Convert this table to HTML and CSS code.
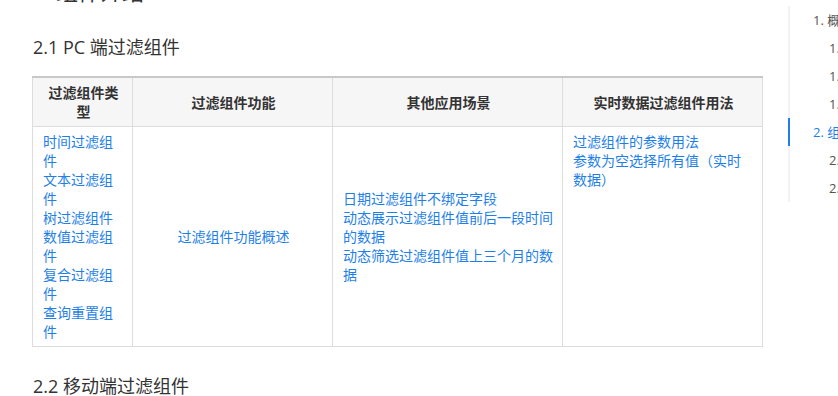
FILE: index.html
```html
<!DOCTYPE html>
<html lang="zh-CN">
<head>
<meta charset="utf-8">
<title>组件介绍</title>
<link rel="stylesheet" href="styles.css">
</head>
<body>
<div class="page">
  <main class="content">
    <h2 class="h2">2. 组件介绍<span class="anchor"><svg viewBox="0 0 16 16" width="13" height="13"><path d="M6.5 9.5l3-3M7 4.5l1.2-1.2a2.5 2.5 0 0 1 3.5 3.5L10.5 8M9 11.5l-1.2 1.2a2.5 2.5 0 0 1-3.5-3.5L5.5 8" fill="none" stroke="#c8c8c8" stroke-width="1.6" stroke-linecap="round"/></svg></span></h2>
    <h3 class="h3">2.1 PC 端过滤组件</h3>
    <table class="tbl">
      <colgroup>
        <col class="c1"><col class="c2"><col class="c3"><col class="c4">
      </colgroup>
      <thead>
        <tr>
          <th>过滤组件类型</th>
          <th>过滤组件功能</th>
          <th>其他应用场景</th>
          <th>实时数据过滤组件用法</th>
        </tr>
      </thead>
      <tbody>
        <tr>
          <td class="top">
            <a class="lnk">时间过滤组件</a><br>
            <a class="lnk">文本过滤组件</a><br>
            <a class="lnk">树过滤组件</a><br>
            <a class="lnk">数值过滤组件</a><br>
            <a class="lnk">复合过滤组件</a><br>
            <a class="lnk">查询重置组件</a>
          </td>
          <td class="mid center"><a class="lnk">过滤组件功能概述</a></td>
          <td class="mid">
            <a class="lnk">日期过滤组件不绑定字段</a><br>
            <a class="lnk">动态展示过滤组件值前后一段时间的数据</a><br>
            <a class="lnk">动态筛选过滤组件值上三个月的数据</a>
          </td>
          <td class="top">
            <a class="lnk">过滤组件的参数用法</a><br>
            <a class="lnk">参数为空选择所有值（实时数据）</a>
          </td>
        </tr>
      </tbody>
    </table>
    <h3 class="h3 h3-next">2.2 移动端过滤组件</h3>
  </main>
  <aside class="toc">
    <div class="toc-item l1">1. 概述</div>
    <div class="toc-item l2">1.1 简介</div>
    <div class="toc-item l2">1.2 说明</div>
    <div class="toc-item l2">1.3 示例</div>
    <div class="toc-item l1 active">2. 组件介绍</div>
    <div class="toc-item l2">2.1 PC 端过滤组件</div>
    <div class="toc-item l2">2.2 移动端过滤组件</div>
  </aside>
</div>
</body>
</html>
```

FILE: styles.css
```css
html, body {
  margin: 0;
  padding: 0;
  background: #fff;
  overflow: hidden;
}
body {
  font-family: "Open Sans", "Noto Sans CJK SC", sans-serif;
  color: #333;
  width: 838px;
  height: 396px;
}
.page {
  display: flex;
  align-items: flex-start;
}
.content {
  width: 730px;
  padding-left: 32px;
  flex: none;
}
.h2 {
  margin: -23px 0 0 0;
  font-size: 22px;
  line-height: 28px;
  font-weight: 400;
  color: #333;
  white-space: nowrap;
}
.anchor {
  margin-left: 6px;
  display: inline-block;
  vertical-align: -1px;
}
.h3 {
  margin: 28px 0 16px 1px;
  font-size: 18px;
  line-height: 26px;
  font-weight: 400;
  color: #333;
}
.h3-next {
  margin-top: 26px;
}
.tbl {
  width: 730px;
  table-layout: fixed;
  border-collapse: collapse;
  font-size: 14px;
  line-height: 19px;
  font-family: "Noto Sans CJK SC", sans-serif;
}
.c1 { width: 100px; }
.c2 { width: 200px; }
.c3 { width: 230px; }
.c4 { width: 200px; }
.tbl th, .tbl td {
  border: 1px solid #dddddd;
  padding: 5px 8px 5px 10px;
}
.tbl thead tr {
  border-top: 2px solid #c8c8c8;
}
.tbl th {
  background: #f6f6f6;
  font-weight: 700;
  color: #333;
  text-align: center;
  vertical-align: middle;
}
.tbl td {
  text-align: left;
}
.tbl td.top { vertical-align: top; }
.tbl td.mid { vertical-align: middle; }
.tbl td.center { text-align: center; }
.lnk {
  color: #1e7fe8;
  text-decoration: none;
}
.toc {
  margin-left: 26px;
  margin-top: 6px;
  border-left: 2px solid #f2f2f2;
  width: 60px;
  flex: none;
  font-size: 13px;
  color: #555;
  font-family: "Open Sans", "Noto Sans CJK SC", sans-serif;
}
.toc-item {
  height: 28px;
  line-height: 28px;
  white-space: nowrap;
  overflow: visible;
}
.toc-item.l1 { padding-left: 23px; }
.toc-item.l2 { padding-left: 39px; }
.toc-item.active {
  color: #1e7fe8;
  margin-left: -2px;
  border-left: 2px solid #1e7fe8;
}
```
